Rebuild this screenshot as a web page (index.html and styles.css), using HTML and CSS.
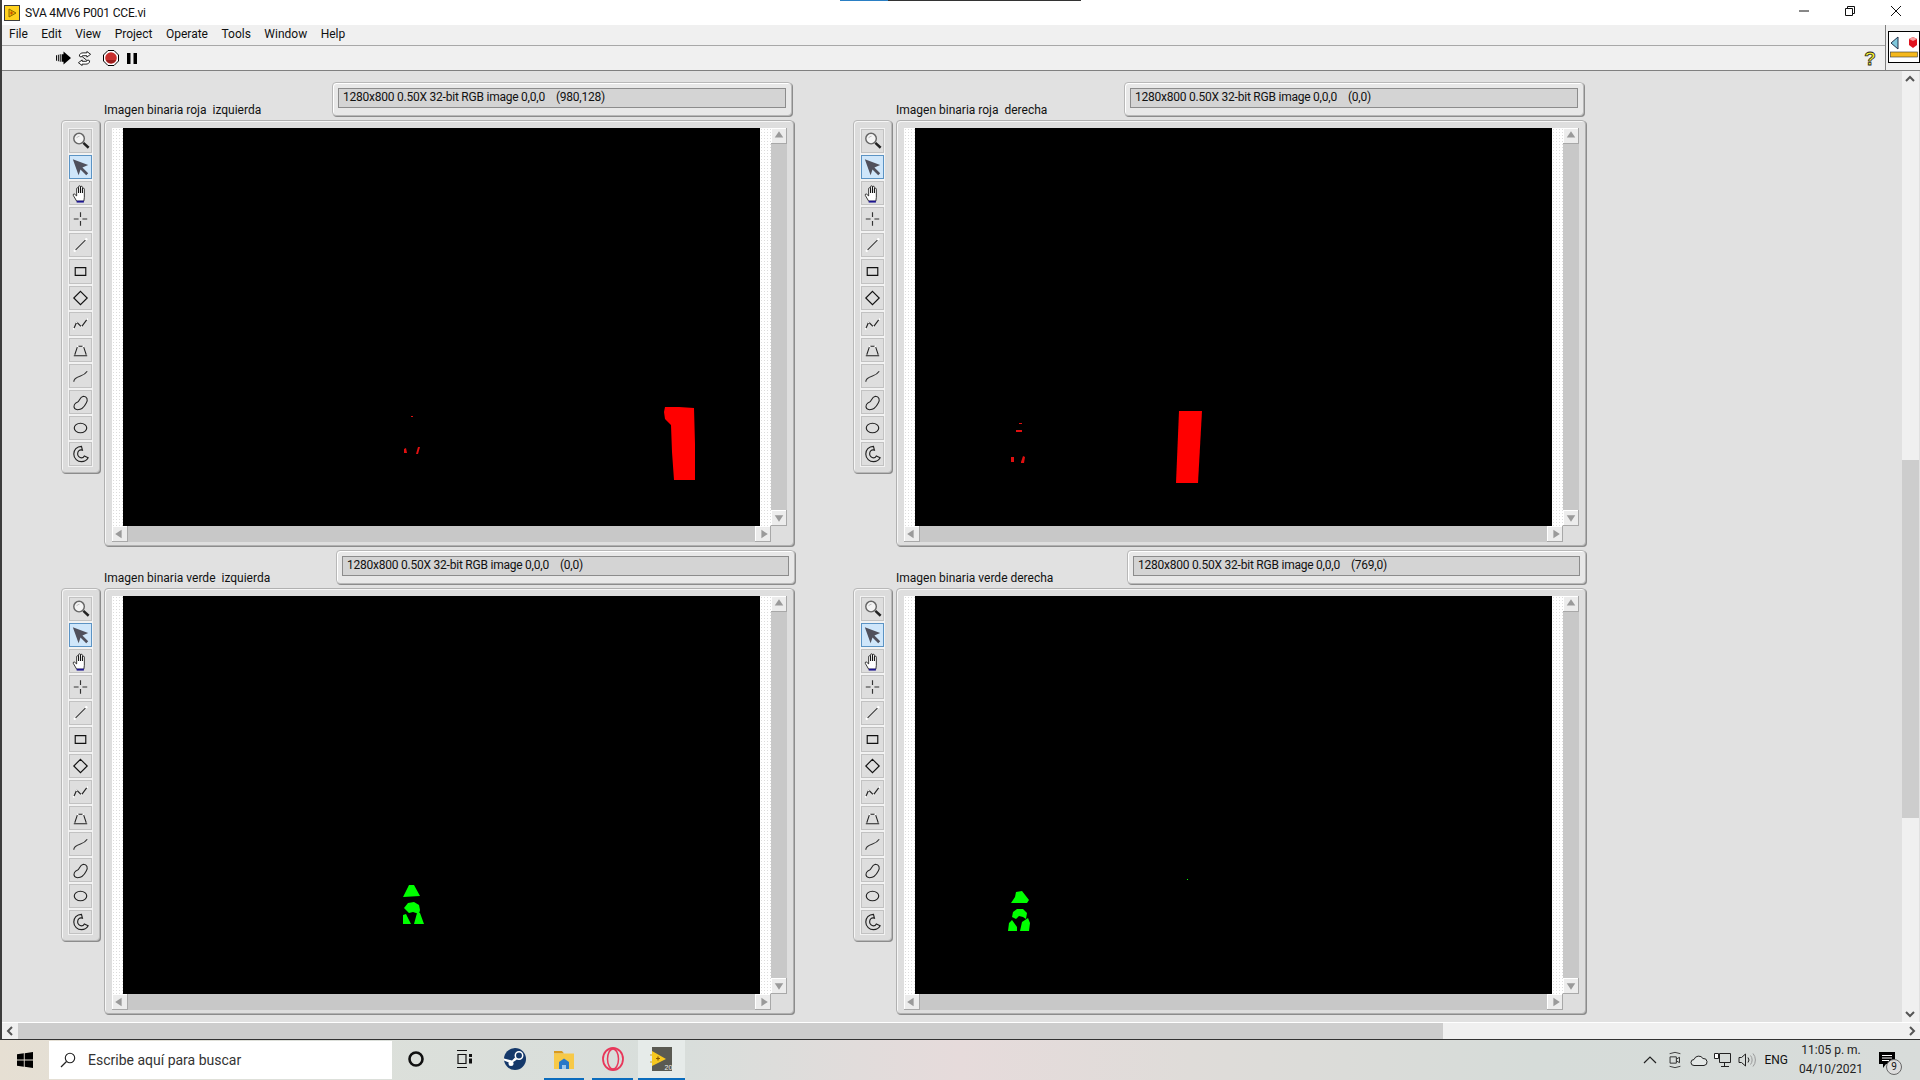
FILE: index.html
```html
<!DOCTYPE html>
<html lang="es">
<head>
<meta charset="utf-8">
<title>SVA 4MV6 P001 CCE.vi</title>
<link rel="stylesheet" href="styles.css">
</head>
<body>
<svg class="defs" width="0" height="0" aria-hidden="true">
  <defs>
    <symbol id="t-zoom" viewBox="0 0 24 24"><circle cx="10.500" cy="9.500" r="5.500" fill="#f4f4f4" stroke="#666" stroke-width="1.500"/><path d="M11 7a3 3 0 0 0-3 2" stroke="#bbb" fill="none"/><path d="M15 14l5.500 5" stroke="#222" stroke-width="2.600"/></symbol>
    <symbol id="t-arrow" viewBox="0 0 24 24"><path d="M4 4l16 6-6 2.500 6 6-2 2-6-6-2 6z" fill="#50505c"/></symbol>
    <symbol id="t-hand" viewBox="0 0 24 24"><path d="M8 20.500L4.500 14.500Q4 13 5.500 13L8 15V7.500a1 1 0 0 1 2 0V12V5.500a1 1 0 0 1 2 0V12V6a1 1 0 0 1 2 0V12V8a1 1 0 0 1 2 0V16.500L15.500 20.500z" fill="#fff" stroke="#000" stroke-width=".8"/><path d="M8 21h7.500" stroke="#1c1590" stroke-width="2"/></symbol>
    <symbol id="t-cross" viewBox="0 0 24 24"><path d="M12 5v5M12 14v5M5 12h5M14 12h5" stroke="#333" stroke-width="1.200"/></symbol>
    <symbol id="t-line" viewBox="0 0 24 24"><path d="M6 18L18 6" stroke="#222" stroke-width="1.100"/><circle cx="6" cy="18" r="1.300" fill="#fff"/><circle cx="18" cy="6" r="1.300" fill="#fff"/></symbol>
    <symbol id="t-rect" viewBox="0 0 24 24"><path d="M6.500 8.500h11v8h-11z" fill="none" stroke="#111" stroke-width="1.200"/></symbol>
    <symbol id="t-diamond" viewBox="0 0 24 24"><path d="M12 5l7 7-7 7-7-7z" fill="none" stroke="#111" stroke-width="1.200"/></symbol>
    <symbol id="t-poly" viewBox="0 0 24 24"><path d="M5 17l3-7 5 5 6-8" fill="none" stroke="#222" stroke-width="1.200"/><circle cx="5" cy="17" r="1" fill="#fff"/><circle cx="8" cy="10" r="1" fill="#fff"/><circle cx="13" cy="15" r="1" fill="#fff"/><circle cx="19" cy="7" r="1" fill="#fff"/></symbol>
    <symbol id="t-trap" viewBox="0 0 24 24"><path d="M5 18h14M6 17l3-9h6l3 9" fill="none" stroke="#222" stroke-width="1.100"/><circle cx="9" cy="8" r="1" fill="#fff"/><circle cx="15" cy="8" r="1" fill="#fff"/></symbol>
    <symbol id="t-free" viewBox="0 0 24 24"><path d="M5 18c0-4 4-5 7-6s5-2 7-5" fill="none" stroke="#333" stroke-width="1.200"/></symbol>
    <symbol id="t-bean" viewBox="0 0 24 24"><path d="M6 19c-2-3 0-6 3-7 2-1 2-5 6-6 4 0 5 4 3 7-2 4-5 7-9 7-1 0-2 0-3-1z" fill="none" stroke="#222" stroke-width="1.100"/></symbol>
    <symbol id="t-oval" viewBox="0 0 24 24"><ellipse cx="12" cy="12" rx="6.500" ry="5" fill="none" stroke="#222" stroke-width="1.200"/></symbol>
    <symbol id="t-ring" viewBox="0 0 24 24"><path d="M13 4c-5 0-8 4-8 8 0 5 4 8 8 8 3 0 6-2 7-4l-4-2c-1 2-2 2-3 2-2 0-4-2-4-4 0-3 2-5 5-4z" fill="none" stroke="#222" stroke-width="1.200"/></symbol>
  </defs>
</svg>

<div class="progress"><span class="progress-done"></span><span class="progress-rest"></span></div>

<div class="window">
  <header class="titlebar">
    <svg class="app-icon" viewBox="0 0 16 16"><rect width="16" height="16" fill="#3c3c3c"/><rect x="1" y="1" width="14" height="14" fill="#ffd21e"/><path d="M5 4l7 4-7 4z" fill="#f2b400" stroke="#8a6a00"/><path d="M6 8h3M7.500 6.500v3" stroke="#c85000"/></svg>
    <span class="title-text">SVA 4MV6 P001 CCE.vi</span>
    <div class="window-buttons">
      <svg class="win-btn" viewBox="0 0 46 22"><path d="M18 11h10" stroke="#111"/></svg>
      <svg class="win-btn" viewBox="0 0 46 22"><path d="M18.500 8.500h7v7h-7zM20.500 8V6.500h7v7H26" fill="none" stroke="#111"/></svg>
      <svg class="win-btn" viewBox="0 0 46 22"><path d="M18 6l10 10M28 6L18 16" stroke="#111"/></svg>
    </div>
  </header>

  <div class="chrome">
    <div class="chrome-main">
      <nav class="menubar">
        <span class="menu-item">File</span>
        <span class="menu-item">Edit</span>
        <span class="menu-item">View</span>
        <span class="menu-item">Project</span>
        <span class="menu-item">Operate</span>
        <span class="menu-item">Tools</span>
        <span class="menu-item">Window</span>
        <span class="menu-item">Help</span>
      </nav>
      <div class="toolbar">
        <svg class="tb-run" viewBox="0 0 16 14"><path d="M0 4h1v6H0zM2 3.500h1v7H2zM4 3h1v8H4zM6 3h2V0l8 7-8 7v-3H6z" fill="#000"/></svg>
        <svg class="tb-cont" viewBox="0 0 17 16"><path d="M3 5.500C3 3 5 2 7 2h4V.5l4 3-4 3V5H7C6 5 5.500 5.500 5 6.500zM14 10.500c0 2.500-2 3.500-4 3.500H6v1.500l-4-3 4-3V11h4c1 0 1.500-.5 2-1.500z" fill="#fff" stroke="#000" stroke-width=".9"/><path d="M6 6l5 4" stroke="#000" stroke-width=".9"/></svg>
        <svg class="tb-abort" viewBox="0 0 16 16"><path d="M5 .5h6L15.500 5v6L11 15.500H5L.5 11V5z" fill="#fff" stroke="#000"/><circle cx="8" cy="8" r="5.800" fill="#c8302e"/><path d="M3 10h10a5.500 5.500 0 0 1-10 0z" fill="#9a1f1e"/></svg>
        <svg class="tb-pause" viewBox="0 0 10 11"><path d="M0 0h3.500v11H0zM6.500 0H10v11H6.500z" fill="#000"/></svg>
        <svg class="tb-help" viewBox="0 0 14 18"><text x="7" y="15.500" text-anchor="middle" class="help-glyph">?</text></svg>
      </div>
    </div>
    <div class="vi-cell">
      <svg class="vi-icon" viewBox="0 0 32 32"><rect x=".5" y=".5" width="31" height="31" fill="#fff" stroke="#000"/><path d="M3 12l7-6v12z" fill="#7fc8dc" stroke="#23304a"/><path d="M21 8l4-2 4 2v6l-4 3-4-3z" fill="#e01420"/><path d="M21 8l4-2 4 2-4 2z" fill="#f7a0a0"/><rect x="2.500" y="21" width="27" height="5" fill="#f5b81c" stroke="#333" stroke-width=".6"/></svg>
    </div>
  </div>

  <div class="workspace">
    <main class="canvas">

      <section class="unit">
        <div class="unit-head head-a">
          <span class="unit-label">Imagen binaria roja  izquierda</span>
          <div class="status"><div class="status-inner">1280x800 0.50X 32-bit RGB image 0,0,0    (980,128)</div></div>
        </div>
        <div class="unit-body">
          <div class="palette">
            <span class="tool"><svg><use href="#t-zoom"/></svg></span>
            <span class="tool tool-on"><svg><use href="#t-arrow"/></svg></span>
            <span class="tool"><svg><use href="#t-hand"/></svg></span>
            <span class="tool"><svg><use href="#t-cross"/></svg></span>
            <span class="tool"><svg><use href="#t-line"/></svg></span>
            <span class="tool"><svg><use href="#t-rect"/></svg></span>
            <span class="tool"><svg><use href="#t-diamond"/></svg></span>
            <span class="tool"><svg><use href="#t-poly"/></svg></span>
            <span class="tool"><svg><use href="#t-trap"/></svg></span>
            <span class="tool"><svg><use href="#t-free"/></svg></span>
            <span class="tool"><svg><use href="#t-bean"/></svg></span>
            <span class="tool"><svg><use href="#t-oval"/></svg></span>
            <span class="tool"><svg><use href="#t-ring"/></svg></span>
          </div>
          <div class="viewer">
            <div class="dots"></div>
            <svg class="image" viewBox="0 0 637 398"><path d="M542 279l14 0 15 1 1 36 0 36h-21l-2-28-1-27-6-6-1-7z" fill="#f00"/><path d="M288 288h2v1h-2zM281 321l2-1 1 5h-3zM295 319h2l-2 7h-2z" fill="#e01010"/></svg>
            <div class="dots"></div>
            <div class="vtrack"><span class="sbtn"><svg viewBox="0 0 15 15"><path d="M7.500 3l4 6h-8z"/></svg></span><span class="sbtn"><svg viewBox="0 0 15 15"><path d="M7.500 11l-4-6h8z"/></svg></span></div>
            <div class="htrack"><span class="sbtn"><svg viewBox="0 0 15 15"><path d="M3 7.500l6-4v8z"/></svg></span><span class="sbtn"><svg viewBox="0 0 15 15"><path d="M12 7.500l-6-4v8z"/></svg></span></div>
          </div>
        </div>
      </section>

      <section class="unit">
        <div class="unit-head head-a">
          <span class="unit-label">Imagen binaria roja  derecha</span>
          <div class="status"><div class="status-inner">1280x800 0.50X 32-bit RGB image 0,0,0    (0,0)</div></div>
        </div>
        <div class="unit-body">
          <div class="palette">
            <span class="tool"><svg><use href="#t-zoom"/></svg></span>
            <span class="tool tool-on"><svg><use href="#t-arrow"/></svg></span>
            <span class="tool"><svg><use href="#t-hand"/></svg></span>
            <span class="tool"><svg><use href="#t-cross"/></svg></span>
            <span class="tool"><svg><use href="#t-line"/></svg></span>
            <span class="tool"><svg><use href="#t-rect"/></svg></span>
            <span class="tool"><svg><use href="#t-diamond"/></svg></span>
            <span class="tool"><svg><use href="#t-poly"/></svg></span>
            <span class="tool"><svg><use href="#t-trap"/></svg></span>
            <span class="tool"><svg><use href="#t-free"/></svg></span>
            <span class="tool"><svg><use href="#t-bean"/></svg></span>
            <span class="tool"><svg><use href="#t-oval"/></svg></span>
            <span class="tool"><svg><use href="#t-ring"/></svg></span>
          </div>
          <div class="viewer">
            <div class="dots"></div>
            <svg class="image" viewBox="0 0 637 398"><path d="M264 283h23l-4 72h-22z" fill="#f00"/><path d="M104 295h3v1h-3zM101 302h6v2h-6zM96 329h3v5h-3zM106 334l2-6 2 1-1 6h-3z" fill="#e01010"/></svg>
            <div class="dots"></div>
            <div class="vtrack"><span class="sbtn"><svg viewBox="0 0 15 15"><path d="M7.500 3l4 6h-8z"/></svg></span><span class="sbtn"><svg viewBox="0 0 15 15"><path d="M7.500 11l-4-6h8z"/></svg></span></div>
            <div class="htrack"><span class="sbtn"><svg viewBox="0 0 15 15"><path d="M3 7.500l6-4v8z"/></svg></span><span class="sbtn"><svg viewBox="0 0 15 15"><path d="M12 7.500l-6-4v8z"/></svg></span></div>
          </div>
        </div>
      </section>

      <section class="unit">
        <div class="unit-head head-b">
          <span class="unit-label">Imagen binaria verde  izquierda</span>
          <div class="status"><div class="status-inner">1280x800 0.50X 32-bit RGB image 0,0,0    (0,0)</div></div>
        </div>
        <div class="unit-body">
          <div class="palette">
            <span class="tool"><svg><use href="#t-zoom"/></svg></span>
            <span class="tool tool-on"><svg><use href="#t-arrow"/></svg></span>
            <span class="tool"><svg><use href="#t-hand"/></svg></span>
            <span class="tool"><svg><use href="#t-cross"/></svg></span>
            <span class="tool"><svg><use href="#t-line"/></svg></span>
            <span class="tool"><svg><use href="#t-rect"/></svg></span>
            <span class="tool"><svg><use href="#t-diamond"/></svg></span>
            <span class="tool"><svg><use href="#t-poly"/></svg></span>
            <span class="tool"><svg><use href="#t-trap"/></svg></span>
            <span class="tool"><svg><use href="#t-free"/></svg></span>
            <span class="tool"><svg><use href="#t-bean"/></svg></span>
            <span class="tool"><svg><use href="#t-oval"/></svg></span>
            <span class="tool"><svg><use href="#t-ring"/></svg></span>
          </div>
          <div class="viewer">
            <div class="dots"></div>
            <svg class="image" viewBox="0 0 637 398"><path d="M286 289h5l6 11-17 1zM285 307l6-1 5 3 1 5-1 4-6-2-4 1-5-5zM280 328v-9l3-1 5 10zM291 328l3-11h3l4 11z" fill="#0f0"/></svg>
            <div class="dots"></div>
            <div class="vtrack"><span class="sbtn"><svg viewBox="0 0 15 15"><path d="M7.500 3l4 6h-8z"/></svg></span><span class="sbtn"><svg viewBox="0 0 15 15"><path d="M7.500 11l-4-6h8z"/></svg></span></div>
            <div class="htrack"><span class="sbtn"><svg viewBox="0 0 15 15"><path d="M3 7.500l6-4v8z"/></svg></span><span class="sbtn"><svg viewBox="0 0 15 15"><path d="M12 7.500l-6-4v8z"/></svg></span></div>
          </div>
        </div>
      </section>

      <section class="unit">
        <div class="unit-head head-c">
          <span class="unit-label">Imagen binaria verde derecha</span>
          <div class="status"><div class="status-inner">1280x800 0.50X 32-bit RGB image 0,0,0    (769,0)</div></div>
        </div>
        <div class="unit-body">
          <div class="palette">
            <span class="tool"><svg><use href="#t-zoom"/></svg></span>
            <span class="tool tool-on"><svg><use href="#t-arrow"/></svg></span>
            <span class="tool"><svg><use href="#t-hand"/></svg></span>
            <span class="tool"><svg><use href="#t-cross"/></svg></span>
            <span class="tool"><svg><use href="#t-line"/></svg></span>
            <span class="tool"><svg><use href="#t-rect"/></svg></span>
            <span class="tool"><svg><use href="#t-diamond"/></svg></span>
            <span class="tool"><svg><use href="#t-poly"/></svg></span>
            <span class="tool"><svg><use href="#t-trap"/></svg></span>
            <span class="tool"><svg><use href="#t-free"/></svg></span>
            <span class="tool"><svg><use href="#t-bean"/></svg></span>
            <span class="tool"><svg><use href="#t-oval"/></svg></span>
            <span class="tool"><svg><use href="#t-ring"/></svg></span>
          </div>
          <div class="viewer">
            <div class="dots"></div>
            <svg class="image" viewBox="0 0 637 398"><path d="M101 296l6-1 7 9-2 3-16 0 4-6zM98 316l4-3 6 0 4 4-1 6-3-2-4-1-3 3-4-2zM93 335l1-8 3-3 5 7v4zM105 335l2-9 6-4 2 5-1 8zM272 283h1v1h-1z" fill="#0f0"/></svg>
            <div class="dots"></div>
            <div class="vtrack"><span class="sbtn"><svg viewBox="0 0 15 15"><path d="M7.500 3l4 6h-8z"/></svg></span><span class="sbtn"><svg viewBox="0 0 15 15"><path d="M7.500 11l-4-6h8z"/></svg></span></div>
            <div class="htrack"><span class="sbtn"><svg viewBox="0 0 15 15"><path d="M3 7.500l6-4v8z"/></svg></span><span class="sbtn"><svg viewBox="0 0 15 15"><path d="M12 7.500l-6-4v8z"/></svg></span></div>
          </div>
        </div>
      </section>

    </main>
    <div class="vscroll">
      <svg class="sarrow" viewBox="0 0 16 16"><path d="M4 10l4-4 4 4" fill="none" stroke="#555" stroke-width="2"/></svg>
      <div class="vscroll-track"><div class="vscroll-thumb"></div></div>
      <svg class="sarrow" viewBox="0 0 16 16"><path d="M4 6l4 4 4-4" fill="none" stroke="#555" stroke-width="2"/></svg>
    </div>
  </div>

  <div class="hscroll">
    <svg class="sarrow" viewBox="0 0 16 16"><path d="M10 4l-4 4 4 4" fill="none" stroke="#555" stroke-width="2"/></svg>
    <div class="hscroll-track"><div class="hscroll-thumb"></div></div>
    <svg class="sarrow" viewBox="0 0 16 16"><path d="M6 4l4 4-4 4" fill="none" stroke="#555" stroke-width="2"/></svg>
  </div>
</div>

<footer class="taskbar">
  <div class="start"><svg class="start-icon" viewBox="0 0 16 16"><path d="M0 2.300l6.800-1v6.200H0zM7.700 1.200L16 0v7.500H7.700zM0 8.400h6.800v6.300l-6.800-1zM7.700 8.400H16V16l-8.300-1.200z" fill="#000"/></svg></div>
  <div class="searchbox">
    <svg class="search-icon" viewBox="0 0 16 16"><circle cx="10" cy="6" r="4.700" fill="none" stroke="#222" stroke-width="1.100"/><path d="M6.500 9.500L1 15" stroke="#222" stroke-width="1.200"/></svg>
    <span class="search-text">Escribe aquí para buscar</span>
  </div>
  <div class="task-slot"><svg class="task-icon" viewBox="0 0 24 24"><circle cx="12" cy="12" r="6.500" fill="none" stroke="#111" stroke-width="2.600"/></svg></div>
  <div class="task-slot"><svg class="task-icon" viewBox="0 0 24 24"><path d="M5 3.500h10M5 20.500h10M6 7.500h8v9H6z" fill="none" stroke="#111" stroke-width="1.200"/><path d="M17 7h3v3h-3zM17 11.500h3v5h-3z" fill="#111"/></svg></div>
  <div class="task-slot slot-steam"><svg class="task-icon" viewBox="0 0 24 24"><circle cx="12" cy="12" r="11" fill="#14386a"/><circle cx="16" cy="8.500" r="3.700" fill="none" stroke="#fff" stroke-width="1.500"/><path d="M1 13.500l7 3 6-4-2-2-3 3-8-2z" fill="#fff"/><circle cx="8" cy="16.500" r="2.500" fill="#fff"/></svg></div>
  <div class="task-slot task-open slot-files"><svg class="task-icon" viewBox="0 0 24 24"><path d="M2 4h8l2 2.500H2z" fill="#d99a1e"/><path d="M2 6.500h20V22H2z" fill="#f7c948"/><path d="M7 15l5-3.500 5 3.500v7H7z" fill="#2a78c8"/><path d="M10 18h4v4h-4z" fill="#9ec7ec"/></svg></div>
  <div class="task-slot task-open slot-opera"><svg class="task-icon" viewBox="0 0 24 24"><ellipse cx="12" cy="12" rx="10" ry="11" fill="none" stroke="#e8375a" stroke-width="1.800"/><ellipse cx="12" cy="12" rx="5.500" ry="10" fill="none" stroke="#e8375a" stroke-width="1.500"/></svg></div>
  <div class="task-slot task-open slot-lv"><svg class="task-icon" viewBox="0 0 24 24"><rect x="2" y="0" width="20" height="24" fill="#5a5a52"/><path d="M2 4l14 8-14 7z" fill="#f7c81e"/><path d="M6 11.500h4M8 9.500v4" stroke="#8a5a00" stroke-width="1.200"/><path d="M0 8h2M0 15h2" stroke="#c8a020"/><text x="14.500" y="22.500" class="lv-ver">20</text></svg></div>
  <div class="tray">
    <svg class="tray-chevron" viewBox="0 0 14 14"><path d="M1 10l6-6 6 6" fill="none" stroke="#222" stroke-width="1.200"/></svg>
    <svg class="tray-icon" viewBox="0 0 16 20"><path d="M2 3q6-3 12 0M2 17q6 3 12 0" fill="none" stroke="#333"/><path d="M2.500 6.500h7v7h-7zM9.500 9l3.500-2v6l-3.500-2" fill="none" stroke="#222"/></svg>
    <svg class="tray-icon" viewBox="0 0 18 14"><path d="M4 12.500a3 3 0 0 1 0-6 5 5 0 0 1 9-1 3.500 3.500 0 0 1 1 7z" fill="#e4e8e6" stroke="#222"/></svg>
    <svg class="tray-icon" viewBox="0 0 18 16"><path d="M5.500 1.500h11v9h-11zM10.500 10.500v4M7 14.500h8" fill="none" stroke="#222"/><path d="M.5 1.500h4v5h-4z" fill="#fff" stroke="#222"/></svg>
    <svg class="tray-icon" viewBox="0 0 18 16"><path d="M1 5.500h2.500L7.500 2v12l-4-3.500H1z" fill="none" stroke="#222"/><path d="M10 5.500a4 4 0 0 1 0 5" fill="none" stroke="#222"/><path d="M12.500 3.500a7 7 0 0 1 0 9M15 1.500a10 10 0 0 1 0 13" fill="none" stroke="#999"/></svg>
    <span class="tray-lang">ENG</span>
    <div class="tray-clock"><span>11:05 p. m.</span><span>04/10/2021</span></div>
    <div class="notify">
      <svg class="notify-icon" viewBox="0 0 16 16"><path d="M0 0h16v12H7l-3 4v-4H0z" fill="#000"/><path d="M3 3.500h10M3 6h10M3 8.500h7" stroke="#fff"/></svg>
      <span class="notify-badge">9</span>
    </div>
  </div>
</footer>
</body>
</html>
```
FILE: styles.css
```css
* { box-sizing: border-box; }
html, body { margin: 0; height: 100%; }
body {
  display: flex;
  flex-direction: column;
  width: 1920px;
  height: 1080px;
  overflow: hidden;
  font-family: "Roboto", "Noto Sans", sans-serif;
  font-size: 12px;
  color: #111;
  background: #e1e1e1;
  position: relative;
}
svg { display: block; }
.defs { position: absolute; }

.progress { position: absolute; top: 0; left: 840px; display: flex; height: 1px; z-index: 3; }
.progress-done { width: 48px; background: #2a7fc4; }
.progress-rest { width: 193px; background: #333; }

.window {
  flex: 1;
  min-height: 0;
  display: flex;
  flex-direction: column;
  border-left: 2px solid #3c3c3c;
  border-bottom: 1px solid #333;
}

.titlebar { height: 25px; background: #fff; display: flex; align-items: center; padding-left: 2px; }
.app-icon { width: 16px; height: 16px; margin-right: 5px; }
.title-text { font-size: 12px; letter-spacing: -.2px; }
.window-buttons { margin-left: auto; display: flex; align-self: flex-start; padding-right: 1px; }
.win-btn { width: 46px; height: 22px; }

.chrome { display: flex; height: 46px; background: #f0f0f0; border-bottom: 1px solid #808080; }
.chrome-main { flex: 1; display: flex; flex-direction: column; }
.menubar { height: 21px; display: flex; align-items: center; gap: 13.5px; padding-left: 7px; border-bottom: 1px solid #a8a8a8; }
.menu-item { font-size: 12px; position: relative; top: -1px; }
.toolbar { flex: 1; display: flex; align-items: center; padding-left: 54px; }
.tb-run { width: 15px; height: 14px; margin-right: 5px; }
.tb-cont { width: 17px; height: 15px; margin-right: 10px; }
.tb-abort { width: 16px; height: 16px; margin-right: 8px; }
.tb-pause { width: 10px; height: 11px; }
.tb-help { width: 14px; height: 18px; margin-left: auto; margin-right: 8px; }
.help-glyph { font-family: "Liberation Sans", sans-serif; font-weight: 700; font-size: 19px; fill: #f4ee30; stroke: #222; stroke-width: .8; }
.vi-cell { width: 35px; border-left: 1px solid #808080; background: #f0f0f0; padding: 6px 0 0 2px; }
.vi-icon { width: 32px; height: 32px; }

.workspace { flex: 1; min-height: 0; display: flex; }
.canvas {
  flex: 1;
  min-width: 0;
  padding: 11px 0 0 59px;
  display: grid;
  grid-template-columns: 792px 792px;
  grid-template-rows: 468px 468px;
  background: #e1e1e1;
}
.unit { display: flex; flex-direction: column; }
.unit-head { height: 38px; display: grid; }
.head-a { grid-template-columns: 271px 460px; }
.head-b { grid-template-columns: 275px 459px; }
.head-c { grid-template-columns: 274px 459px; }
.unit-label { padding-left: 43px; align-self: end; white-space: pre; line-height: 16px; padding-bottom: 2px; font-size: 12px; }
.status {
  height: 34px;
  padding: 5px 5px 7px 5px;
  border: 1px solid #b8b8b8;
  border-radius: 4px;
  background: #e8e8e8;
  box-shadow: 1px 1px 0 #8c8c8c, inset 1px 1px 0 #fff;
}
.status-inner {
  height: 100%;
  padding-left: 4px;
  background: #d4d4d4;
  border: 1px solid #8c8c8c;
  line-height: 16px;
  white-space: pre;
  font-size: 12px;
  letter-spacing: -.23px;
}

.unit-body { display: flex; gap: 4px; align-items: flex-start; }
.palette {
  width: 39px;
  height: 353px;
  padding: 7px 6px 0;
  display: flex;
  flex-direction: column;
  border: 1px solid #b8b8b8;
  border-radius: 4px;
  background: #dcdcdc;
  box-shadow: 1px 1px 0 #8c8c8c, inset 1px 1px 0 #f6f6f6;
}
.tool {
  width: 25px;
  height: 26.1px;
  flex: none;
  border: 1px solid #f2f2f2;
  background: #dedede;
  box-shadow: inset 0 0 0 1px #c2c2c2;
  display: block;
}
.tool svg { width: 23px; height: 24px; }
.tool-on { background: #cfe6fa; box-shadow: inset 0 0 0 1px #5b93c4; }

.viewer {
  width: 690px;
  height: 426px;
  padding: 7px 0 0 7px;
  display: grid;
  grid-template-columns: 11px 637px 11px 16px;
  grid-template-rows: 398px 16px;
  border: 1px solid #b0b0b0;
  border-radius: 4px;
  background: #dedede;
  box-shadow: 1px 1px 0 #8c8c8c, inset 1px 1px 0 #f6f6f6;
}
.dots {
  background-color: #fff;
  background-image: radial-gradient(#dcdcdc 1px, transparent 1px);
  background-size: 3px 3px;
}
.image { width: 637px; height: 398px; background: #000; }
.vtrack { background: #c8c8c8; display: flex; flex-direction: column; justify-content: space-between; }
.htrack { grid-column: 1 / 4; background: #c8c8c8; display: flex; justify-content: space-between; }
.sbtn { width: 16px; height: 16px; display: block; background: #ececec; box-shadow: inset -1px -1px 0 #a8a8a8, inset 1px 1px 0 #fff; }
.sbtn svg { width: 16px; height: 16px; fill: #9a9a9a; }

.vscroll { width: 17px; background: #f0f0f0; display: flex; flex-direction: column; flex: none; margin-right: 1px; }
.sarrow { width: 16px; height: 16px; flex: none; }
.vscroll-track { flex: 1; padding-top: 373px; }
.vscroll-thumb { height: 358px; background: #cdcdcd; }
.hscroll { height: 17px; background: #f0f0f0; display: flex; align-items: center; border-top: 1px solid #fff; flex: none; }
.hscroll-track { flex: 1; height: 16px; }
.hscroll-thumb { width: 1425px; height: 100%; background: #cdcdcd; }

.taskbar {
  height: 40px;
  flex: none;
  display: flex;
  align-items: stretch;
  background: linear-gradient(90deg, #e6dfd3 0%, #dde0da 15%, #d8dedb 35%, #e6dbdb 50%, #dfdcd9 62%, #d6dcd9 80%, #d8dcda 100%);
}
.start { width: 49px; display: flex; align-items: center; justify-content: center; }
.start-icon { width: 16px; height: 16px; }
.searchbox { width: 343px; margin: 1px 0; background: #fff; display: flex; align-items: center; padding-left: 11px; }
.search-icon { width: 16px; height: 16px; margin-right: 12px; }
.search-text { font-size: 14px; color: #333; }
.task-slot { width: 48px; flex: none; display: flex; align-items: center; justify-content: center; border-bottom: 2px solid transparent; }
.task-open { border-bottom-color: #0b6cbd; }
.slot-steam { width: 54px; }
.slot-files { width: 40px; margin-left: 2px; }
.slot-opera { width: 41px; margin-left: 8px; }
.slot-lv { width: 47px; margin-left: 5px; background: #e6ebe9; }
.task-icon { width: 24px; height: 24px; }
.lv-ver { font-family: "Liberation Sans", sans-serif; font-size: 7px; fill: #eee; }

.tray { margin-left: auto; display: flex; align-items: center; }
.tray-chevron { width: 14px; height: 14px; margin-right: 9px; }
.tray-icon { width: 18px; height: 18px; margin-right: 6px; }
.tray-lang { font-size: 12px; margin: 0 12px 0 2px; }
.tray-clock { display: flex; flex-direction: column; align-items: center; font-size: 12px; line-height: 19px; width: 62px; color: #222; }
.notify { position: relative; width: 58px; height: 100%; display: flex; align-items: center; padding-left: 17px; }
.notify-icon { width: 16px; height: 16px; }
.notify-badge {
  position: absolute;
  left: 24px;
  top: 19px;
  width: 16px;
  height: 16px;
  border: 1px solid #666;
  border-radius: 50%;
  background: #ddd;
  font-size: 10px;
  line-height: 14px;
  text-align: center;
}
```
